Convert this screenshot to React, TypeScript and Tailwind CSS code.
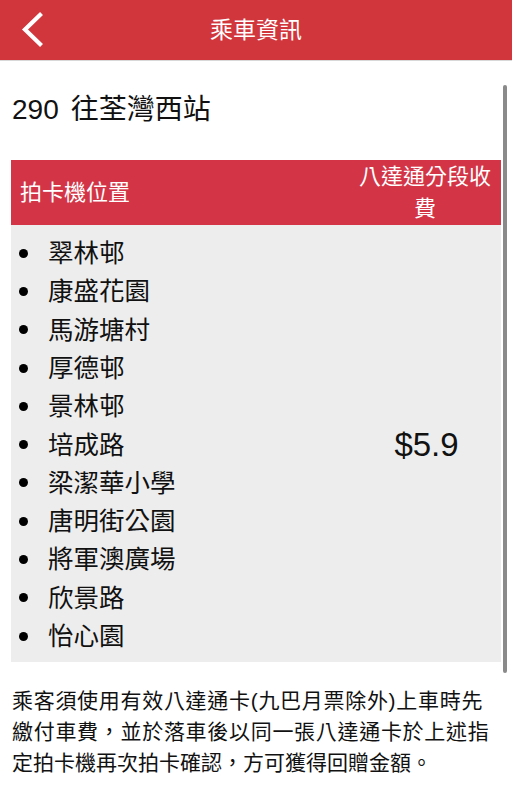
import React from "react";

const stops = [
  "翠林邨",
  "康盛花園",
  "馬游塘村",
  "厚德邨",
  "景林邨",
  "培成路",
  "梁潔華小學",
  "唐明街公園",
  "將軍澳廣場",
  "欣景路",
  "怡心園",
];

export default function App() {
  return (
    <div className="relative w-[512px] h-[800px] overflow-hidden bg-white font-['Liberation_Sans','Noto_Sans_CJK_TC',sans-serif] text-[#111]">
      {/* top bar */}
      <div className="relative h-[61px] bg-[#d1363d] border-b border-[#d8d8d8] flex items-center justify-center">
        <svg
          className="absolute left-[18px] top-[11px]"
          width="28"
          height="38"
          viewBox="0 0 28 38"
          fill="none"
        >
          <path
            d="M22 4 L7 18.5 L22 33"
            stroke="white"
            strokeWidth="4.2"
            strokeLinecap="square"
          />
        </svg>
        <span className="text-white text-[23px] leading-none">乘車資訊</span>
      </div>

      <div className="pl-[11px] pr-[11px]">
        <h1 className="pt-[29px] pl-px text-[28px] leading-[40px]">
          290<span className="ml-[12px]">往荃灣西站</span>
        </h1>

        {/* fare table */}
        <div className="mt-[30px] w-[490px]">
          <div className="flex items-center bg-[#d33547] text-white text-[22px] h-[65px]">
            <div className="flex-1 pl-[9px]">拍卡機位置</div>
            <div className="w-[152px] px-[8px] text-center leading-[32px]">八達通分段收費</div>
          </div>
          <div className="flex items-center bg-[#ededed] pt-[9px] pb-[7px]">
            <ul className="flex-1">
              {stops.map((s) => (
                <li key={s} className="flex items-center h-[38.3px] text-[25.5px]">
                  <span className="w-[9px] h-[9px] rounded-full bg-black ml-[8px] mr-[20px]" />
                  <span>{s}</span>
                </li>
              ))}
            </ul>
            <div className="w-[152px] text-center text-[33px] pl-[3px]">$5.9</div>
          </div>
        </div>

        {/* note */}
        <p className="mt-[23px] pl-px text-[21px] leading-[31px]">
          <span className="tracking-[0.7px]">乘客須使用有效八達通卡(九巴月票除外)上車時先</span>
          <br />
          <span className="tracking-[0.7px]">繳付車費，並於落車後以同一張八達通卡於上述指</span>
          <br />
          定拍卡機再次拍卡確認，方可獲得回贈金額。
        </p>
      </div>

      {/* scroll indicator */}
      <div className="absolute right-[5px] top-[85px] w-[4px] h-[588px] rounded-full bg-[#8a8a8a]" />
    </div>
  );
}
